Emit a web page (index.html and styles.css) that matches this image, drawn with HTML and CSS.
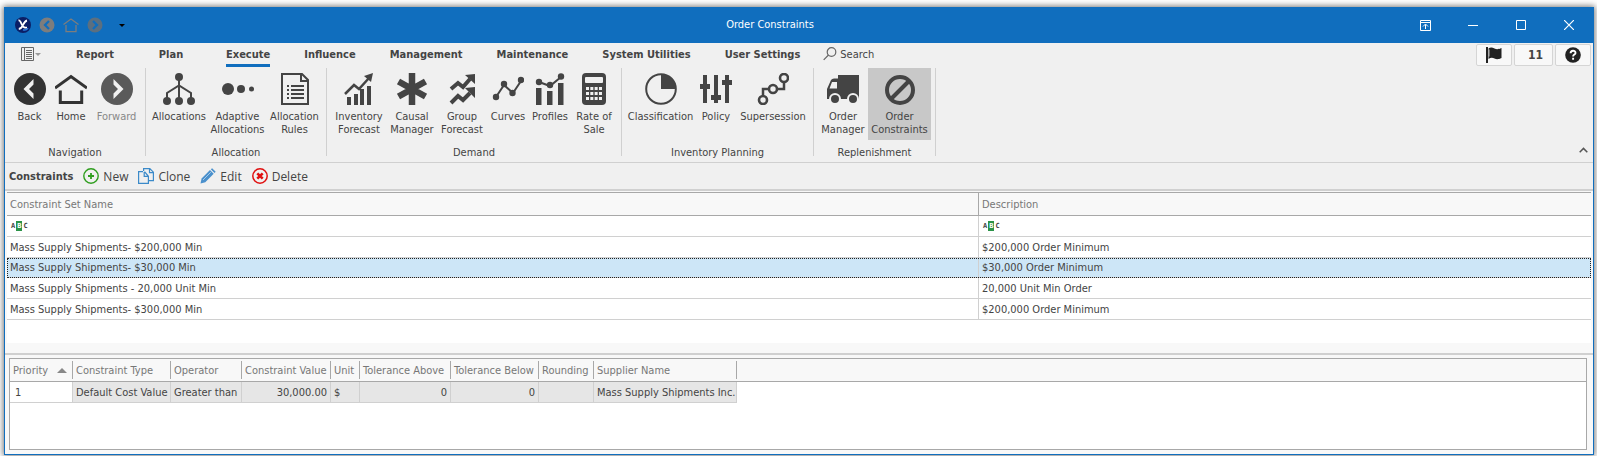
FILE: index.html
```html
<!DOCTYPE html>
<html lang="en">
<head>
<meta charset="utf-8">
<title>Order Constraints</title>
<link rel="stylesheet" href="styles.css">
</head>
<body>
<div class="window">
  <header class="titlebar">
    <div class="quick">
      <svg class="ic16" viewBox="0 0 16 16"><circle cx="8" cy="8" r="8" fill="#0b1f66"/><path d="M3.500 3.500c1.500-.3 2 1 2.800 3s1.700 3.700 3.700 4.200h2M12 3.500C9.800 4 9 6 7.800 8.500S5.500 11.800 3.800 12" fill="none" stroke="#fff" stroke-width="1.800"/><path d="M8 12.800c2 .6 4-.2 5-1.700" fill="none" stroke="#2b7de0" stroke-width="1.500"/></svg>
      <button aria-label="Back"><svg class="ic16" viewBox="0 0 32 32"><circle cx="16" cy="16" r="15" fill="#7d7d7d"/><path d="M20 8l-8 8 8 8" fill="none" stroke="#106ebe" stroke-width="4.500"/></svg></button>
      <button aria-label="Home"><svg class="ic16" viewBox="0 0 32 32"><path d="M1 15L16 4l15 11M6 16v13h20V16" fill="none" stroke="#7d7d7d" stroke-width="2.500"/></svg></button>
      <button aria-label="Forward"><svg class="ic16" viewBox="0 0 32 32"><circle cx="16" cy="16" r="15" fill="#5b6f80"/><path d="M12 8l8 8-8 8" fill="none" stroke="#106ebe" stroke-width="4.500"/></svg></button>
      <button class="more" aria-label="Customize"><svg width="6" height="3" viewBox="0 0 6 3"><path d="M0 0h6L3 3z" fill="#000"/></svg></button>
    </div>
    <h1 class="title">Order Constraints</h1>
    <div class="controls">
      <button aria-label="Ribbon display options"><svg width="11" height="11" viewBox="0 0 11 11" fill="none" stroke="#fff"><path d="M.5.5h10v10H.5zM.5 2.500h10M5.500 9V4.500M3 6.500l2.500-2.500L8 6.500"/></svg></button>
      <button aria-label="Minimize"><svg width="10" height="10" viewBox="0 0 10 10"><path d="M0 5.500h10" stroke="#fff"/></svg></button>
      <button aria-label="Maximize"><svg width="10" height="10" viewBox="0 0 10 10"><path d="M.5.5h9v9h-9z" fill="none" stroke="#fff"/></svg></button>
      <button aria-label="Close"><svg width="10" height="10" viewBox="0 0 10 10"><path d="M0 0l10 10M10 0L0 10" stroke="#fff" stroke-width="1.200"/></svg></button>
    </div>
  </header>

  <nav class="tabs">
    <button class="appmenu" aria-label="Application menu">
      <svg width="20" height="14" viewBox="0 0 20 14" fill="none" stroke="#666"><path d="M.5.5h12v13H.5zM3.500.5v13M5 3.500h6M5 5.500h6M5 7.500h6M5 9.500h6M5 11.500h6"/><path d="M14 6h6l-3 3z" fill="#999" stroke="none"/></svg>
    </button>
    <button class="tab"><span>Report</span></button>
    <button class="tab"><span>Plan</span></button>
    <button class="tab active"><span>Execute</span></button>
    <button class="tab"><span>Influence</span></button>
    <button class="tab"><span>Management</span></button>
    <button class="tab"><span>Maintenance</span></button>
    <button class="tab"><span>System Utilities</span></button>
    <button class="tab"><span>User Settings</span></button>
    <button class="search"><svg width="14" height="14" viewBox="0 0 14 14" fill="none" stroke="#666" stroke-width="1.200"><circle cx="8.500" cy="5" r="4.300"/><path d="M5.500 8L.7 12.800"/></svg>Search</button>
    <div class="status">
      <button aria-label="Flag"><svg class="ic16" viewBox="0 0 16 16" fill="#222"><path d="M0 0h2v16H0zM2.500 1.500c2-1.500 4-1 6 0s4 1 7-.5v10c-3 1.500-5 1.500-7 .5s-4-1-6 .5z"/><path d="M3 2.500v7" stroke="#ddd" stroke-width=".8"/></svg></button>
      <button class="count">11</button>
      <button aria-label="Help"><svg class="ic16" viewBox="0 0 16 16"><circle cx="8" cy="8" r="7.800" fill="#222"/><path d="M5.600 6.300c0-3.400 4.900-3.200 4.900-.4 0 1.700-2.400 1.700-2.400 3.600M8.100 10.700v2" fill="none" stroke="#fff" stroke-width="1.900"/></svg></button>
    </div>
  </nav>

  <div class="ribbon">
    <section class="group nav">
      <div class="items">
        <button><svg class="ic32" viewBox="0 0 32 32"><circle cx="16" cy="16" r="16" fill="#333"/><path d="M19.500 6v5.500L15 16l4.500 4.500V26L9.500 16z" fill="#f0f0f0"/></svg>Back</button>
        <button><svg class="ic32" viewBox="0 0 32 32" fill="none" stroke="#333"><path d="M0 15L16 3.500 32 15" stroke-width="3"/><path d="M5.300 17.500v12h21.400v-12" stroke-width="3"/></svg>Home</button>
        <button class="off"><svg class="ic32" viewBox="0 0 32 32"><circle cx="16" cy="16" r="16" fill="#5a5a5a"/><path d="M12.500 6v5.500L17 16l-4.500 4.500V26l10-10z" fill="#f0f0f0"/></svg>Forward</button>
      </div>
      <h2>Navigation</h2>
    </section>
    <section class="group alloc">
      <div class="items">
        <button><svg class="ic32" viewBox="0 0 32 32" fill="#444"><circle cx="16" cy="4" r="4"/><circle cx="4" cy="28" r="4"/><circle cx="16" cy="28" r="4"/><circle cx="28" cy="28" r="4"/><path d="M16 4v24M4 28v-8l12-7.500L28 20v8" fill="none" stroke="#444" stroke-width="2"/></svg>Allocations</button>
        <button><svg class="ic32" viewBox="0 0 32 32" fill="#444"><circle cx="6" cy="16" r="6"/><circle cx="19" cy="16" r="4"/><circle cx="29.500" cy="16" r="2.500"/></svg>Adaptive<br>Allocations</button>
        <button><svg class="ic32" viewBox="0 0 32 32" fill="none" stroke="#444" stroke-width="2"><path d="M3 1h20l6 6v24H3z"/><path d="M22 1v7h7"/><path d="M12 13h13M12 17h13M12 21h13M12 25h13M8 13h2M8 17h2M8 21h2M8 25h2"/></svg>Allocation<br>Rules</button>
      </div>
      <h2>Allocation</h2>
    </section>
    <section class="group demand">
      <div class="items">
        <button><svg class="ic32" viewBox="0 0 32 32" fill="#444"><path d="M4 24h4v8H4zM11 21h4v11h-4zM17 16h4v16h-4zM24 13h4v19h-4z"/><path d="M2 21l9-9 5 4L26 5" fill="none" stroke="#444" stroke-width="2.500"/><path d="M30 0l-2 9-7-6z"/></svg>Inventory<br>Forecast</button>
        <button><svg class="ic32" viewBox="0 0 32 32"><path d="M16 0v32M2.500 8.500l27 15M29.500 8.500l-27 15" stroke="#444" stroke-width="6.500"/></svg>Causal<br>Manager</button>
        <button><svg class="ic32" viewBox="0 0 32 32" fill="#444"><path d="M5 16l7-6 5 4 7-8M5 30l7-7 5 4 7-7" fill="none" stroke="#444" stroke-width="4"/><path d="M29 1v10L19 2zM29 14v11L19 15z"/></svg>Group<br>Forecast</button>
        <button><svg class="ic32" viewBox="0 0 32 32" fill="#444"><path d="M4 24l8-12 9 8 8-12" fill="none" stroke="#444" stroke-width="2"/><circle cx="4" cy="24" r="3.200"/><circle cx="12" cy="11" r="3.200"/><circle cx="20.500" cy="20" r="3.200"/><circle cx="29" cy="7" r="3.200"/></svg>Curves</button>
        <button><svg class="ic32" viewBox="0 0 32 32" fill="#444"><path d="M2 15h5.500v17H2zM13 18h5.500v14H13zM24 10h5.500v22H24z"/><path d="M5 9l11 4 11-9" fill="none" stroke="#444" stroke-width="2"/><circle cx="5" cy="9" r="3.200"/><circle cx="16" cy="12" r="3.200"/><circle cx="27" cy="3.500" r="3.200"/></svg>Profiles</button>
        <button><svg class="ic32" viewBox="0 0 32 32"><rect x="4" width="24" height="32" rx="4" fill="#444"/><rect x="7" y="4" width="18" height="6" rx="1" fill="#f0f0f0"/><path d="M8 15.500h16M8 20.500h16M8 25.500h16" stroke="#f0f0f0" stroke-width="3" stroke-dasharray="3 1.330"/></svg>Rate of<br>Sale</button>
      </div>
      <h2>Demand</h2>
    </section>
    <section class="group planning">
      <div class="items">
        <button><svg class="ic32" viewBox="0 0 32 32"><circle cx="16" cy="16" r="14.800" fill="none" stroke="#444" stroke-width="2"/><path d="M16 1v15h15A15 15 0 0 0 16 1z" fill="#444"/></svg>Classification</button>
        <button><svg class="ic32" viewBox="0 0 32 32" fill="#444"><path d="M3 2h4v28H3zM14 2h4v28h-4zM25 2h4v28h-4zM0 11h10v5H0zM11 22h10v5H11zM22 7h10v5H22z"/></svg>Policy</button>
        <button><svg class="ic32" viewBox="0 0 32 32" fill="none" stroke="#444"><path d="M6 22v-6h5M21 16h6v-6" stroke-width="2.500"/><g stroke-width="2.600"><circle cx="6" cy="27" r="4"/><circle cx="16" cy="16" r="4"/><circle cx="27" cy="5" r="4"/></g></svg>Supersession</button>
      </div>
      <h2>Inventory Planning</h2>
    </section>
    <section class="group replen">
      <div class="items">
        <button><svg class="ic32" viewBox="0 0 32 32" fill="#444"><path fill-rule="evenodd" d="M11 2h21v24H0V16L4 7q1-1.500 3-1.500h4zM5 9l-2.500 6.500H10V9z"/><g stroke="#f0f0f0" stroke-width="2"><circle cx="8" cy="26" r="5"/><circle cx="26" cy="26" r="5"/></g></svg>Order<br>Manager</button>
        <button class="selected"><svg class="ic32" viewBox="0 0 32 32" fill="none" stroke="#444" stroke-width="4"><circle cx="16" cy="17" r="13"/><path d="M7 26L25 8"/></svg>Order<br>Constraints</button>
      </div>
      <h2>Replenishment</h2>
    </section>
    <button class="collapse" aria-label="Collapse ribbon"><svg width="9" height="6" viewBox="0 0 9 6"><path d="M.7 5.200L4.500 1.400l3.800 3.800" fill="none" stroke="#555" stroke-width="1.500"/></svg></button>
  </div>

  <div class="toolbar">
    <strong>Constraints</strong>
    <button><svg class="ic16" viewBox="0 0 16 16" fill="none" stroke="#2f9e1f"><circle cx="8" cy="8" r="7.200" stroke-width="1.400"/><path d="M8 5v6M5 8h6" stroke-width="1.800"/></svg>New</button>
    <button><svg class="ic16" viewBox="0 0 16 16" fill="none" stroke="#3b8ac9" stroke-width="1.200"><path d="M5 3.600H.6v11.800h9.800V8.300L6.500 3.600M6.200 4v4.300h4.200"/><path d="M5.600 3V.6h6.200l3.600 3.600v8.400h-4.400M11.500.6v4h4"/></svg>Clone</button>
    <button><svg class="ic16" viewBox="0 0 16 16" fill="#4a90cc"><path d="M1.600 10.500L10 2.100l3.700 3.700-8.400 8.400L.5 15.500z"/><path d="M10.800 1.300L12.100.2l3.600 3.500-1.200 1.400z"/><path d="M3 12L10.800 4.200" stroke="#cfe3f3" stroke-width=".7"/></svg>Edit</button>
    <button><svg class="ic16" viewBox="0 0 16 16" fill="none" stroke="#e01010"><circle cx="8" cy="8" r="7.200" stroke-width="1.500"/><path d="M5.300 5.300l5.400 5.400M10.700 5.300l-5.400 5.400" stroke-width="2.600"/></svg>Delete</button>
  </div>

  <main class="master">
    <table class="sets">
      <thead>
        <tr><th>Constraint Set Name</th><th>Description</th></tr>
        <tr class="filter">
          <td><label><span class="abc">A<b>B</b>C</span><input aria-label="Filter by name"></label></td>
          <td><label><span class="abc">A<b>B</b>C</span><input aria-label="Filter by description"></label></td>
        </tr>
      </thead>
      <tbody>
        <tr><td>Mass Supply Shipments- $200,000 Min</td><td>$200,000 Order Minimum</td></tr>
        <tr class="current"><td>Mass Supply Shipments- $30,000 Min</td><td>$30,000 Order Minimum</td></tr>
        <tr><td>Mass Supply Shipments - 20,000 Unit Min</td><td>20,000 Unit Min Order</td></tr>
        <tr><td>Mass Supply Shipments- $300,000 Min</td><td>$200,000 Order Minimum</td></tr>
      </tbody>
    </table>
  </main>

  <section class="detail">
    <div class="box">
      <table class="rules">
        <colgroup><col class="w63"><col class="w98"><col class="w71"><col class="w89"><col class="w29"><col class="w91"><col class="w88"><col class="w55"><col class="w143"><col></colgroup>
        <thead>
          <tr><th><span class="sort">Priority<svg width="10" height="5" viewBox="0 0 10 5"><path d="M0 5h10L5 0z" fill="#888"/></svg></span></th><th>Constraint Type</th><th>Operator</th><th>Constraint Value</th><th>Unit</th><th>Tolerance Above</th><th>Tolerance Below</th><th>Rounding</th><th>Supplier Name</th><th></th></tr>
        </thead>
        <tbody>
          <tr><td>1</td><td>Default Cost Value</td><td>Greater than</td><td class="num">30,000.00</td><td>$</td><td class="num">0</td><td class="num">0</td><td></td><td>Mass Supply Shipments Inc.</td><td></td></tr>
        </tbody>
      </table>
    </div>
  </section>
</div>
</body>
</html>
```

FILE: styles.css
```css
* { box-sizing: border-box; }
body {
  margin: 0;
  padding: 7px 3px 1px 4px;
  min-height: 100vh;
  display: flex;
  background: #fff;
  font: 11px/13px "DejaVu Sans Condensed", "DejaVu Sans", sans-serif;
  color: #444;
}
button {
  margin: 0; padding: 0; border: 0; background: none;
  font: inherit; color: inherit; white-space: nowrap;
}
svg { display: block; flex: none; }
h1, h2 { margin: 0; font: inherit; }
.ic16 { width: 16px; height: 16px; }
.ic32 { width: 32px; height: 32px; }

.window {
  flex: 1; min-width: 0;
  display: flex; flex-direction: column;
  border: 1px solid #106ebe; border-top: 0;
  background: #f8f8f8;
  box-shadow: 0 0 6px 1px #777;
}

.titlebar { display: flex; height: 36px; background: #106ebe; color: #fff; }
.quick { display: flex; align-items: center; gap: 8px; width: 134px; padding-left: 10px; }
.more { padding-left: 8px; }
.title { flex: 1; text-align: center; line-height: 36px; }
.controls { display: flex; }
.controls button { width: 48px; display: flex; align-items: center; justify-content: center; }

.tabs { display: flex; height: 24px; background: #f0f0f0; }
.appmenu { width: 52px; padding-left: 16px; padding-top: 4px; display: flex; align-items: flex-start; }
.tab { min-width: 76px; padding: 4px 17px 0; display: flex; justify-content: center; font-weight: bold; }
.tab span { line-height: 15px; padding-bottom: 1px; }
.tab.active span { border-bottom: 3px solid #106ebe; }
.search { padding: 4px 0 0 6px; display: flex; gap: 3px; align-items: flex-start; line-height: 15px; }
.status { margin-left: auto; padding: 1px 2px 0; display: flex; gap: 2px; height: 24px; }
.status button {
  width: 36px; height: 22px; border: 1px solid #d5d5d5; border-radius: 2px; background: #f8f8f8;
  display: flex; align-items: center; justify-content: center;
}
.status .count { width: 39px; padding-left: 4px; font-weight: bold; font-size: 12px; }

.ribbon { display: flex; padding-bottom: 6px; background: #f0f0f0; border-bottom: 1px solid #d0d0d0; }
.group {
  display: flex; flex-direction: column; align-items: stretch;
  margin-top: 1px; padding: 0 4px; height: 88px;
  border-right: 1px solid #d0d0d0;
}
.items { display: grid; flex: none; height: 72px; }
.items button { display: flex; flex-direction: column; align-items: center; justify-content: flex-start; padding-top: 5px; }
.items svg { margin-bottom: 5px; }
.items .off { color: #888; }
.items .selected { background: #c8c8c8; }
.group h2 { text-align: center; padding-top: 6px; }
.nav .items { grid-template-columns: 41px 42px 49px; }
.alloc .items { grid-template-columns: 58px 59px 55px; }
.demand .items { grid-template-columns: 56px 50px 50px 42px 42px 46px; }
.planning .items { grid-template-columns: 69px 42px 72px; }
.replen .items { grid-template-columns: 50px 63px; }
.collapse { margin-left: auto; padding: 0 5px 3px; display: flex; align-items: flex-end; }

.toolbar {
  display: flex; align-items: center; gap: 10px; height: 28px; padding-left: 4px;
  background: #f0f0f0; border-bottom: 2px solid #d0d0d0;
  font-family: "Open Sans", sans-serif; font-size: 12px;
}
.toolbar strong { font: bold 11px "DejaVu Sans Condensed", sans-serif; }
.toolbar button { display: flex; align-items: center; gap: 4px; }

table { border-spacing: 0; table-layout: fixed; width: 100%; }
th, td { padding: 0 3px; text-align: left; font-weight: normal; white-space: nowrap; }
th { height: 23px; color: #777; background: #f8f8f8; border-bottom: 1px solid #a8a8a8; }

.master { height: 151px; margin: 1px 2px 0; background: #fff; }
.sets th { height: 24px; border-top: 1px solid #a8a8a8; }
.sets th:first-child, .sets td:first-child { width: 971px; }
.sets td { height: 21px; border-bottom: 1px solid #d0d0d0; }
.sets td + td { border-left: 1px solid #d0d0d0; }
.sets th + th { border-left: 1px solid #a8a8a8; }
.filter label { display: flex; align-items: center; }
.filter input { flex: 1; min-width: 0; height: 16px; border: 0; padding: 0; background: none; }
.abc { display: flex; align-items: center; padding-left: 1px; gap: 1px; font: bold 7px/10px "DejaVu Sans Mono", monospace; }
.abc b { padding: 0 1px; background: #2b9348; color: #fff; }
.sets .current td { height: 20px; background: #cde6f7; }
.current { outline: 1px dotted #222; outline-offset: -1px; }

.detail { flex: 1; display: flex; margin-top: 10px; padding: 3px 6px 4px 4px; border-top: 2px solid #d0d0d0; }
.box { flex: 1; border: 1px solid #a8a8a8; background: #fff; }
.w63 { width: 63px; } .w98 { width: 98px; } .w71 { width: 71px; } .w89 { width: 89px; } .w29 { width: 29px; }
.w91 { width: 91px; } .w88 { width: 88px; } .w55 { width: 55px; } .w143 { width: 143px; }
.rules th {
  background: linear-gradient(#a8a8a8, #a8a8a8) right center / 1px 18px no-repeat #f8f8f8;
}
.rules th:last-child { background: #f8f8f8; }
.rules td { height: 21px; background: #e6e6e6; border-right: 1px solid #d0d0d0; border-bottom: 1px solid #d0d0d0; }
.rules td:first-child { background: #fff; padding-left: 5px; }
.rules td:last-child { background: none; border: 0; }
.rules .num { text-align: right; }
.sort { display: flex; align-items: center; gap: 9px; }
```
